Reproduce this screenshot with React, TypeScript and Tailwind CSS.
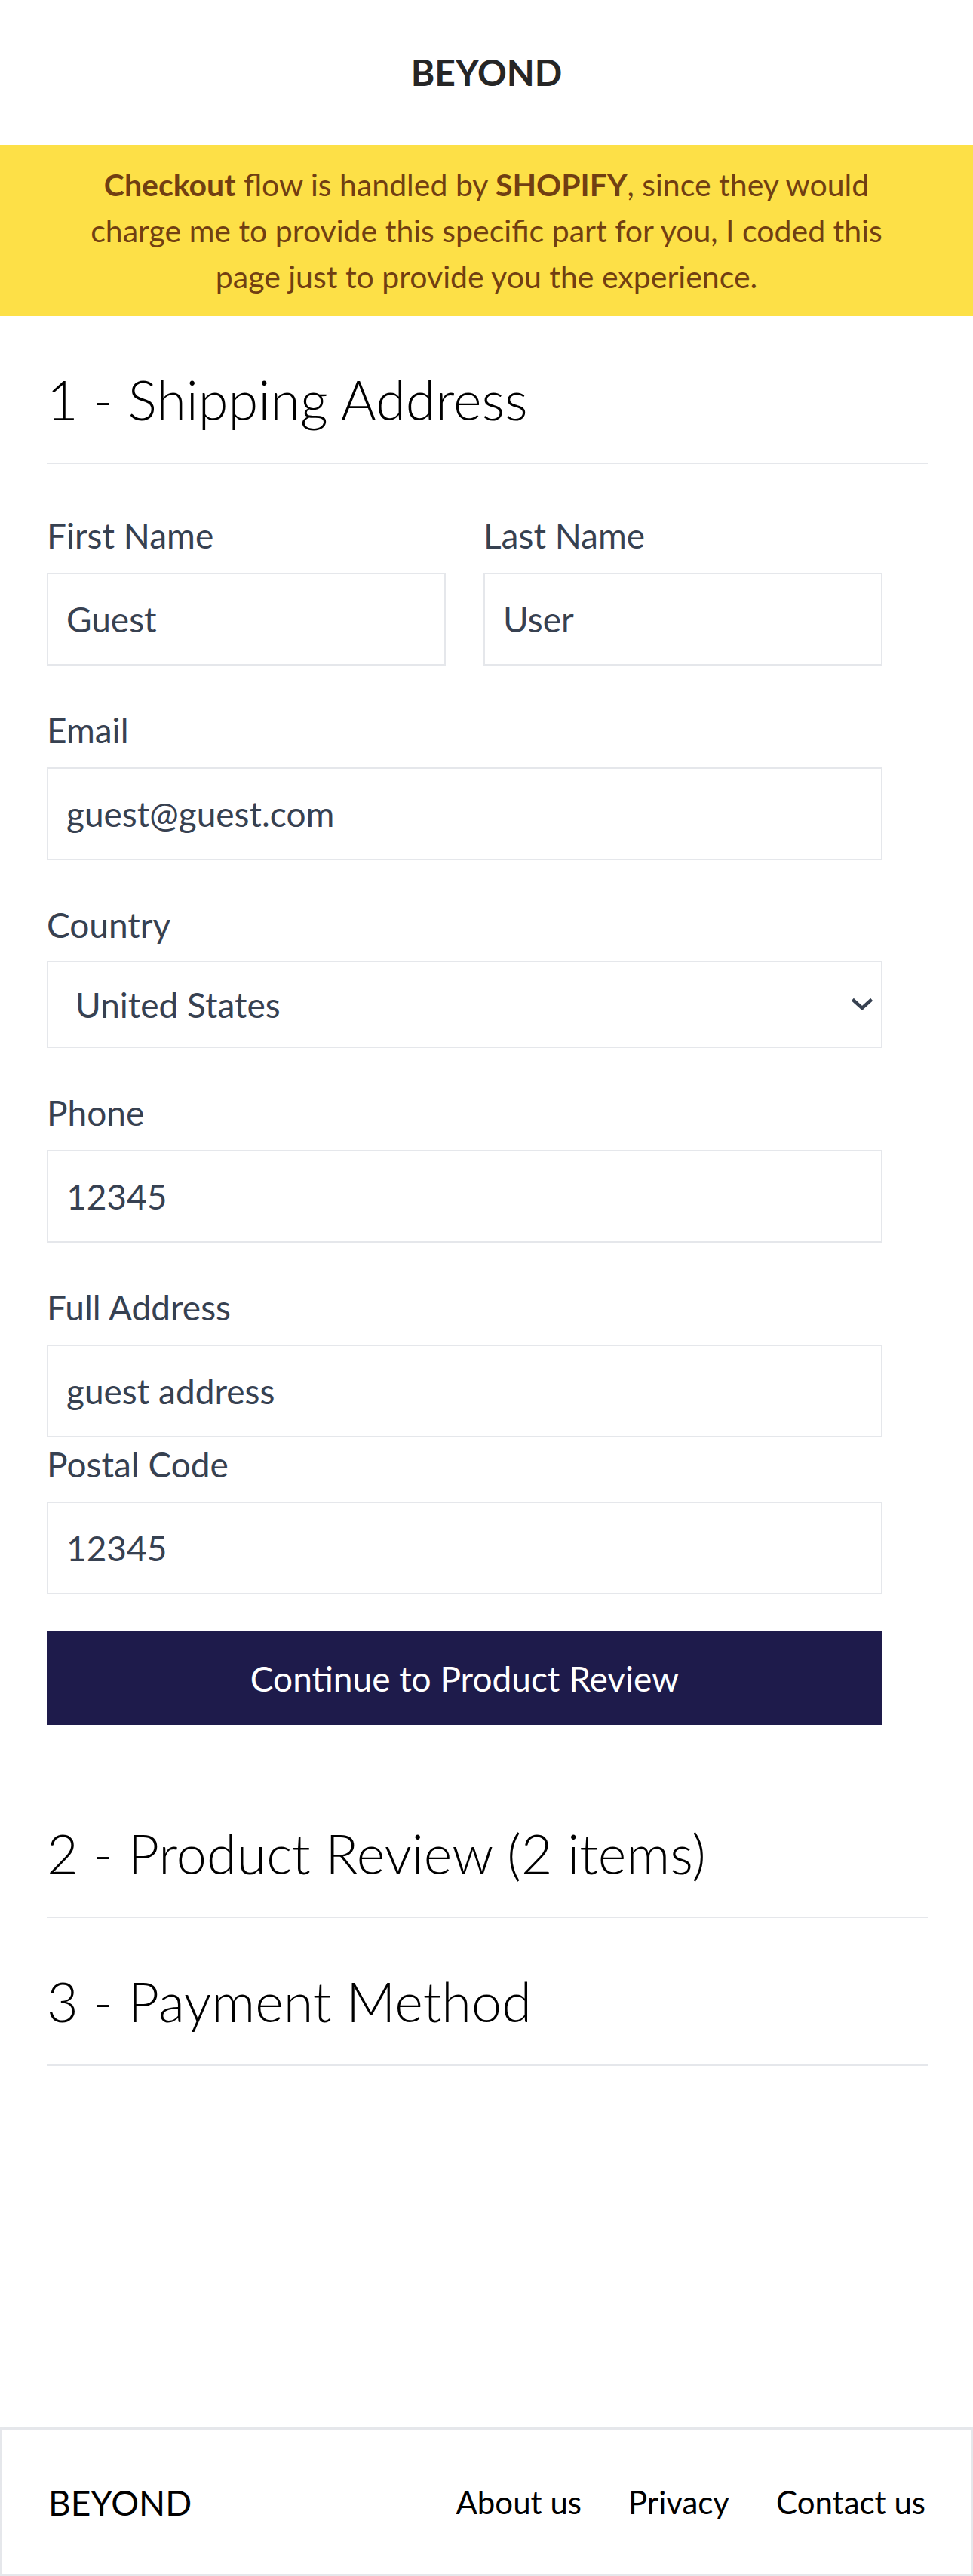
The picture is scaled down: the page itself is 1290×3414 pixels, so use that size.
import React from "react";

const font = { fontFamily: '"Lato", "Noto Sans", sans-serif' };

function Field({ label, value, className = "" }: { label: string; value: string; className?: string }) {
  return (
    <div className={`flex flex-col ${className}`}>
      <label className="text-[46px] leading-[46px] text-[#374151] mb-[26px]">{label}</label>
      <input
        readOnly
        value={value}
        className="h-[123px] w-full border-2 border-[#e5e7eb] bg-white px-[24px] text-[46px] text-[#374151] outline-none"
      />
    </div>
  );
}

function SectionHeading({ children }: { children: React.ReactNode }) {
  return (
    <div className="border-b-2 border-[#e5e7eb] pt-[74px] pb-[48px]">
      <h2 className="text-[72px] leading-[72px] font-light text-black">{children}</h2>
    </div>
  );
}

export default function App() {
  return (
    <div className="min-h-[3414px] flex flex-col bg-white" style={font}>
      <header className="h-[192px] flex items-center justify-center">
        <span className="text-[48px] font-bold text-[#262626]">BEYOND</span>
      </header>

      <div className="bg-[#fde047] py-[22px] px-[95px] text-center text-[41px] leading-[61px] text-[#713f12]">
        <strong className="font-bold">Checkout</strong> flow is handled by <strong className="font-bold">SHOPIFY</strong>, since they would charge me to provide this specific part for you, I coded this page just to provide you the experience.
      </div>

      <main className="flex-1 pl-[62px] pr-[59px]">
        <section>
          <SectionHeading>1 - Shipping Address</SectionHeading>
          <form className="w-[1108px] pt-[72px]" onSubmit={(e) => e.preventDefault()}>
            <div className="flex gap-[50px] mb-[63px]">
              <Field label="First Name" value="Guest" className="flex-1" />
              <Field label="Last Name" value="User" className="flex-1" />
            </div>
            <Field label="Email" value="guest@guest.com" className="mb-[63px]" />
            <div className="flex flex-col mb-[63px]">
              <label className="text-[46px] leading-[46px] text-[#374151] mb-[24px]">Country</label>
              <div className="relative">
                <select
                  defaultValue="United States"
                  className="appearance-none h-[116px] w-full border-2 border-[#e5e7eb] bg-white pl-[36px] text-[46px] text-[#374151] outline-none"
                >
                  <option>United States</option>
                  <option>Canada</option>
                  <option>United Kingdom</option>
                </select>
                <svg
                  className="pointer-events-none absolute right-[12px] top-1/2 -translate-y-1/2"
                  width="30"
                  height="20"
                  viewBox="0 0 30 20"
                  fill="none"
                >
                  <path d="M4 5 L15 15 L26 5" stroke="#374151" strokeWidth="4.5" strokeLinecap="square" strokeLinejoin="miter" />
                </svg>
              </div>
            </div>
            <Field label="Phone" value="12345" className="mb-[63px]" />
            <Field label="Full Address" value="guest address" className="mb-[13px]" />
            <Field label="Postal Code" value="12345" className="mb-[49px]" />
            <button
              type="submit"
              className="h-[124px] w-full bg-[#1e1b4b] text-white text-[46px]"
            >
              Continue to Product Review
            </button>
          </form>
          <div className="h-[60px]" />
        </section>

        <section>
          <SectionHeading>2 - Product Review (2 items)</SectionHeading>
        </section>
        <section>
          <SectionHeading>3 - Payment Method</SectionHeading>
        </section>
      </main>

      <footer className="h-[198px] border-2 border-t-4 border-[#e5e7eb] flex items-center justify-between pl-[62px] pr-[61px]">
        <span className="text-[46px] text-black">BEYOND</span>
        <nav className="flex items-center gap-[62px] text-[42px] text-black">
          <a href="#">About us</a>
          <a href="#">Privacy</a>
          <a href="#">Contact us</a>
        </nav>
      </footer>
    </div>
  );
}
